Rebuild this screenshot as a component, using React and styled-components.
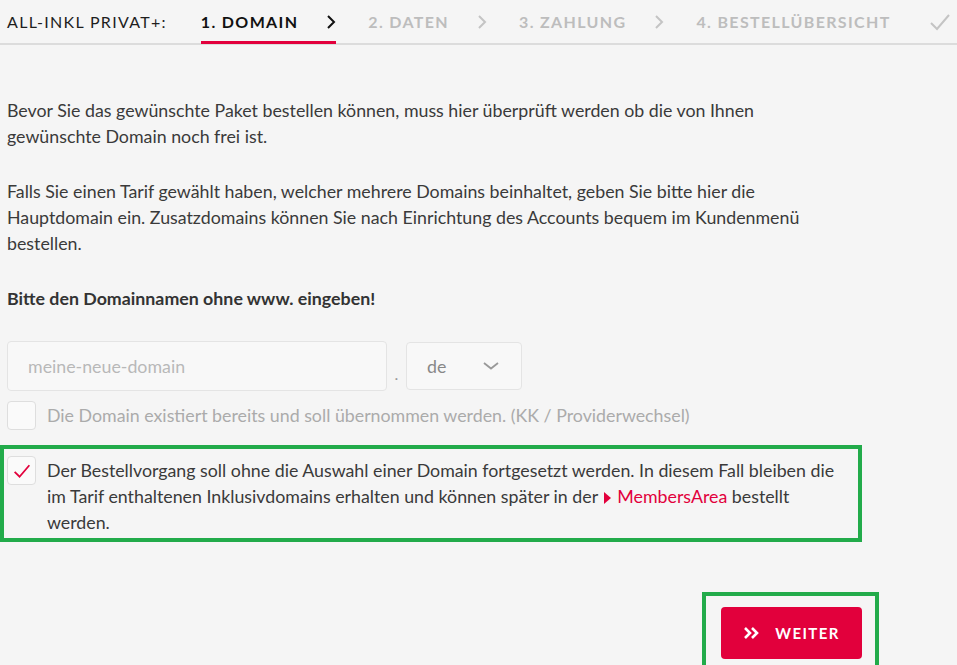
import React from 'react';
import styled, { createGlobalStyle } from 'styled-components';

const GlobalStyle = createGlobalStyle`
  html, body {
    margin: 0;
    padding: 0;
    background: #f5f5f5;
  }
  body {
    font-family: Lato, 'Open Sans', sans-serif;
    color: #3a3a3a;
    overflow: hidden;
  }
`;

const steps = [
  { label: '1. DOMAIN', active: true },
  { label: '2. DATEN' },
  { label: '3. ZAHLUNG' },
  { label: '4. BESTELLÜBERSICHT', last: true },
];

const Chevron = ({ color }) => (
  <svg width='10' height='16' viewBox='0 0 10 16'>
    <polyline points='2,2 8,8 2,14' fill='none' stroke={color} strokeWidth='2' />
  </svg>
);

const Check = ({ color, size = 22, width = 2 }) => (
  <svg width={size} height={size} viewBox='0 0 22 22'>
    <polyline points='2,12 8,18 20,4' fill='none' stroke={color} strokeWidth={width} />
  </svg>
);

const App = () => {
  return (
    <>
      <GlobalStyle />
      <Page>
        <Header>
          <Brand>ALL-INKL PRIVAT+:</Brand>
          {steps.map((s) => (
            <Step key={s.label} active={s.active}>
              <span>{s.label}</span>
              {!s.last && <Chevron color={s.active ? '#111' : '#c4c4c4'} />}
            </Step>
          ))}
          <Done>
            <Check color='#c4c4c4' />
          </Done>
        </Header>

        <Content>
          <Text>
            Bevor Sie das gewünschte Paket bestellen können, muss hier überprüft werden ob die von Ihnen
            gewünschte Domain noch frei ist.
          </Text>
          <Text>
            Falls Sie einen Tarif gewählt haben, welcher mehrere Domains beinhaltet, geben Sie bitte hier die
            Hauptdomain ein. Zusatzdomains können Sie nach Einrichtung des Accounts bequem im Kundenmenü
            bestellen.
          </Text>
          <Text bold>Bitte den Domainnamen ohne www. eingeben!</Text>

          <DomainRow>
            <DomainInput placeholder='meine-neue-domain' />
            <Dot>.</Dot>
            <Select>
              <span>de</span>
              <svg width='18' height='10' viewBox='0 0 18 10'>
                <polyline points='2,2 9,7.5 16,2' fill='none' stroke='#999' strokeWidth='1.8' />
              </svg>
            </Select>
          </DomainRow>

          <CheckRow>
            <Box />
            <CheckLabel muted>
              Die Domain existiert bereits und soll übernommen werden. (KK / Providerwechsel)
            </CheckLabel>
          </CheckRow>

          <Highlight>
            <CheckRow>
              <Box>
                <Check color='#e2003c' size={18} width={2.2} />
              </Box>
              <CheckLabel>
                Der Bestellvorgang soll ohne die Auswahl einer Domain fortgesetzt werden. In diesem Fall bleiben die
                im Tarif enthaltenen Inklusivdomains erhalten und können später in der <Link>MembersArea</Link>{' '}
                bestellt werden.
              </CheckLabel>
            </CheckRow>
          </Highlight>

          <Actions>
            <ButtonFrame>
              <Button>
                <svg width='17' height='14' viewBox='0 0 17 14'>
                  <polyline points='2,2 7,7 2,12' fill='none' stroke='#fff' strokeWidth='2.6' />
                  <polyline points='9,2 14,7 9,12' fill='none' stroke='#fff' strokeWidth='2.6' />
                </svg>
                WEITER
              </Button>
            </ButtonFrame>
          </Actions>
        </Content>
      </Page>
    </>
  );
};

export default App;

const Page = styled.div`
  width: 957px;
  height: 665px;
  overflow: hidden;
`;

const Header = styled.div`
  display: flex;
  align-items: center;
  height: 43px;
  padding-left: 7px;
  border-bottom: 2px solid #dcdcdc;
  font-size: 16px;
  letter-spacing: 1.3px;
`;

const Brand = styled.div`
  color: #1e1e1e;
  margin-right: 34px;
`;

const Step = styled.div`
  display: flex;
  align-items: center;
  gap: 28px;
  height: 43px;
  box-sizing: border-box;
  margin-right: 32px;
  font-weight: 700;
  letter-spacing: 1.35px;
  color: ${(p) => (p.active ? '#111' : '#bdbdbd')};
  border-bottom: 3px solid ${(p) => (p.active ? '#e2003c' : 'transparent')};
  margin-bottom: -2px;
  padding-top: 1px;
`;

const Done = styled.div`
  margin-left: auto;
  margin-right: 6px;
  display: flex;
`;

const Content = styled.div`
  padding: 52px 7px 0;
`;

const Text = styled.p`
  margin: 0 0 29px;
  max-width: 845px;
  font-size: 17.8px;
  line-height: 26px;
  font-weight: ${(p) => (p.bold ? 700 : 400)};
  color: ${(p) => (p.bold ? '#333' : '#3a3a3a')};
`;

const DomainRow = styled.div`
  display: flex;
  align-items: center;
  margin-top: 30px;
`;

const DomainInput = styled.input`
  width: 380px;
  height: 50px;
  box-sizing: border-box;
  border: 1px solid #e4e4e4;
  border-radius: 4px;
  background: #f8f8f8;
  padding: 0 20px;
  font-family: inherit;
  font-size: 17.8px;
  outline: none;
  &::placeholder {
    color: #b8b8b8;
  }
`;

const Dot = styled.span`
  width: 19px;
  text-align: center;
  color: #999;
  font-size: 16px;
  padding-top: 14px;
`;

const Select = styled.div`
  width: 116px;
  height: 48px;
  box-sizing: border-box;
  border: 1px solid #e4e4e4;
  border-radius: 4px;
  background: #f8f8f8;
  display: flex;
  align-items: center;
  justify-content: space-between;
  padding: 0 21px 0 20px;
  color: #888;
  font-size: 17.8px;
`;

const CheckRow = styled.div`
  display: flex;
  align-items: flex-start;
  gap: 11px;
  margin-top: 10px;
`;

const Box = styled.div`
  flex: none;
  width: 29px;
  height: 29px;
  box-sizing: border-box;
  border: 1px solid #dedede;
  border-radius: 4px;
  background: #fafafa;
  display: flex;
  align-items: center;
  justify-content: center;
`;

const CheckLabel = styled.div`
  font-size: 17.8px;
  line-height: 26px;
  color: ${(p) => (p.muted ? '#ababab' : '#3a3a3a')};
  padding-top: 1px;
`;

const Link = styled.span`
  color: #e2003c;
  &::before {
    content: '';
    display: inline-block;
    width: 0;
    height: 0;
    margin: 0 6px 0 2px;
    border-top: 6px solid transparent;
    border-bottom: 6px solid transparent;
    border-left: 7px solid #e2003c;
    vertical-align: -1px;
  }
`;

const Highlight = styled.div`
  width: 862px;
  box-sizing: border-box;
  margin: 15px 0 0 -7px;
  border: 4px solid #22ab4a;
  padding: 7px 4px 3px 3px;
  & > div {
    margin-top: 0;
  }
`;

const Actions = styled.div`
  display: flex;
  padding-left: 695px;
  margin-top: 50px;
`;

const ButtonFrame = styled.div`
  border: 4px solid #22ab4a;
  padding: 11px 13px 20px 15px;
`;

const Button = styled.button`
  width: 141px;
  height: 52px;
  border: none;
  border-radius: 4px;
  background: #e2003c;
  color: #fff;
  font-family: inherit;
  font-weight: 700;
  font-size: 15px;
  letter-spacing: 1.4px;
  display: flex;
  align-items: center;
  justify-content: center;
  gap: 15px;
`;
